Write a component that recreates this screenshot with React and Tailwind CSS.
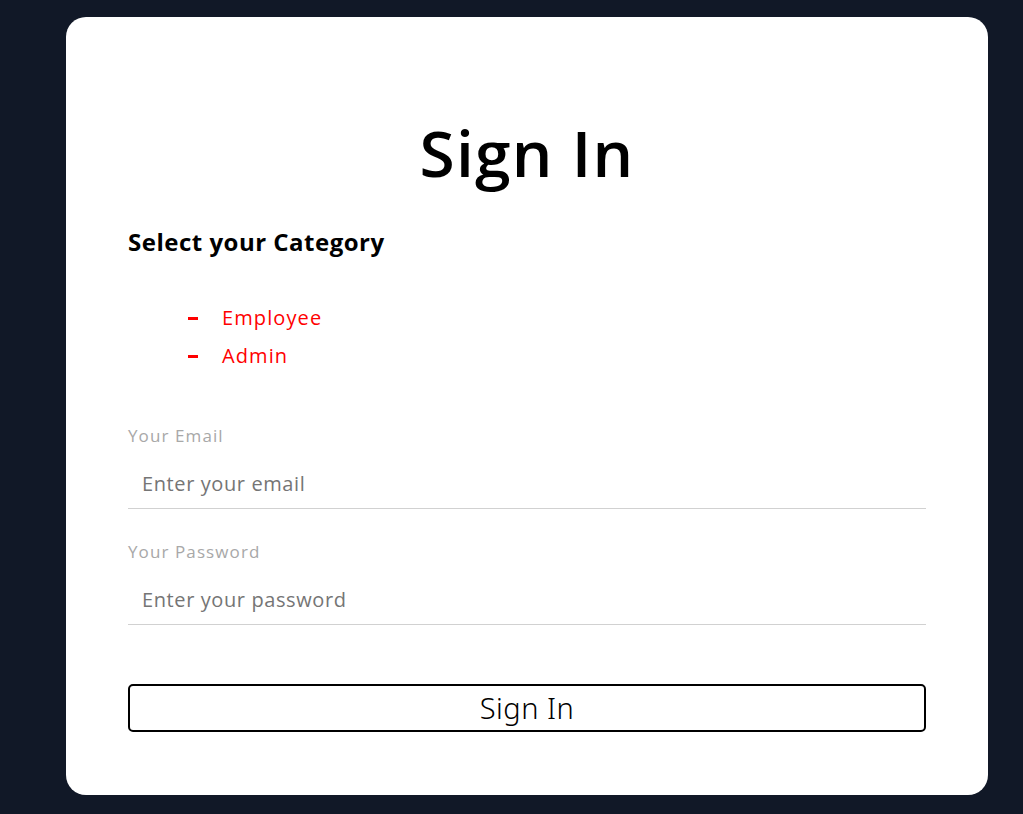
export default function App() {
  const font = { fontFamily: '"Open Sans", "Noto Sans", sans-serif' };
  return (
    <div className="min-h-screen bg-[#111827] pt-[17px] pb-[19px]" style={font}>
      <div className="ml-[66px] w-[922px] rounded-[20px] bg-white px-[62px] pt-[97px] pb-[63px]">
        <h1 className="text-center text-[64px] leading-[78px] font-semibold tracking-[1.3px] text-black">Sign In</h1>
        <h3 className="mt-[36px] text-[24px] leading-[28px] font-bold tracking-[0.5px] text-black">Select your Category</h3>
        <ul className="mt-[43px] pl-[60px]">
          {["Employee", "Admin"].map((t) => (
            <li key={t} className="flex h-[38px] items-center text-[20px] tracking-[1.1px] text-[#ff0000]">
              <span className="mr-[24px] h-[3px] w-[10px] bg-[#ff0000]" />
              {t}
            </li>
          ))}
        </ul>
        <label className="mt-[50px] block text-[17px] leading-[22px] tracking-[1.1px] text-[#a8a8a8]">Your Email</label>
        <input
          type="email"
          placeholder="Enter your email"
          className="mt-[11px] block h-[51px] w-full border-b border-[#d1d1d1] pl-[14px] text-[20px] tracking-[0.6px] outline-none placeholder:text-[#757575]"
          style={font}
        />
        <label className="mt-[32px] block text-[17px] leading-[22px] tracking-[1.1px] text-[#a8a8a8]">Your Password</label>
        <input
          type="password"
          placeholder="Enter your password"
          className="mt-[11px] block h-[51px] w-full border-b border-[#d1d1d1] pl-[14px] text-[20px] tracking-[0.6px] outline-none placeholder:text-[#757575]"
          style={font}
        />
        <button
          className="mt-[59px] block h-[48px] w-full rounded-[5px] border-2 border-black bg-white text-[29px] tracking-[0.5px] text-black"
          style={{ fontFamily: '"Noto Sans", "Open Sans", sans-serif', fontWeight: 300 }}
        >
          Sign In
        </button>
      </div>
    </div>
  );
}
